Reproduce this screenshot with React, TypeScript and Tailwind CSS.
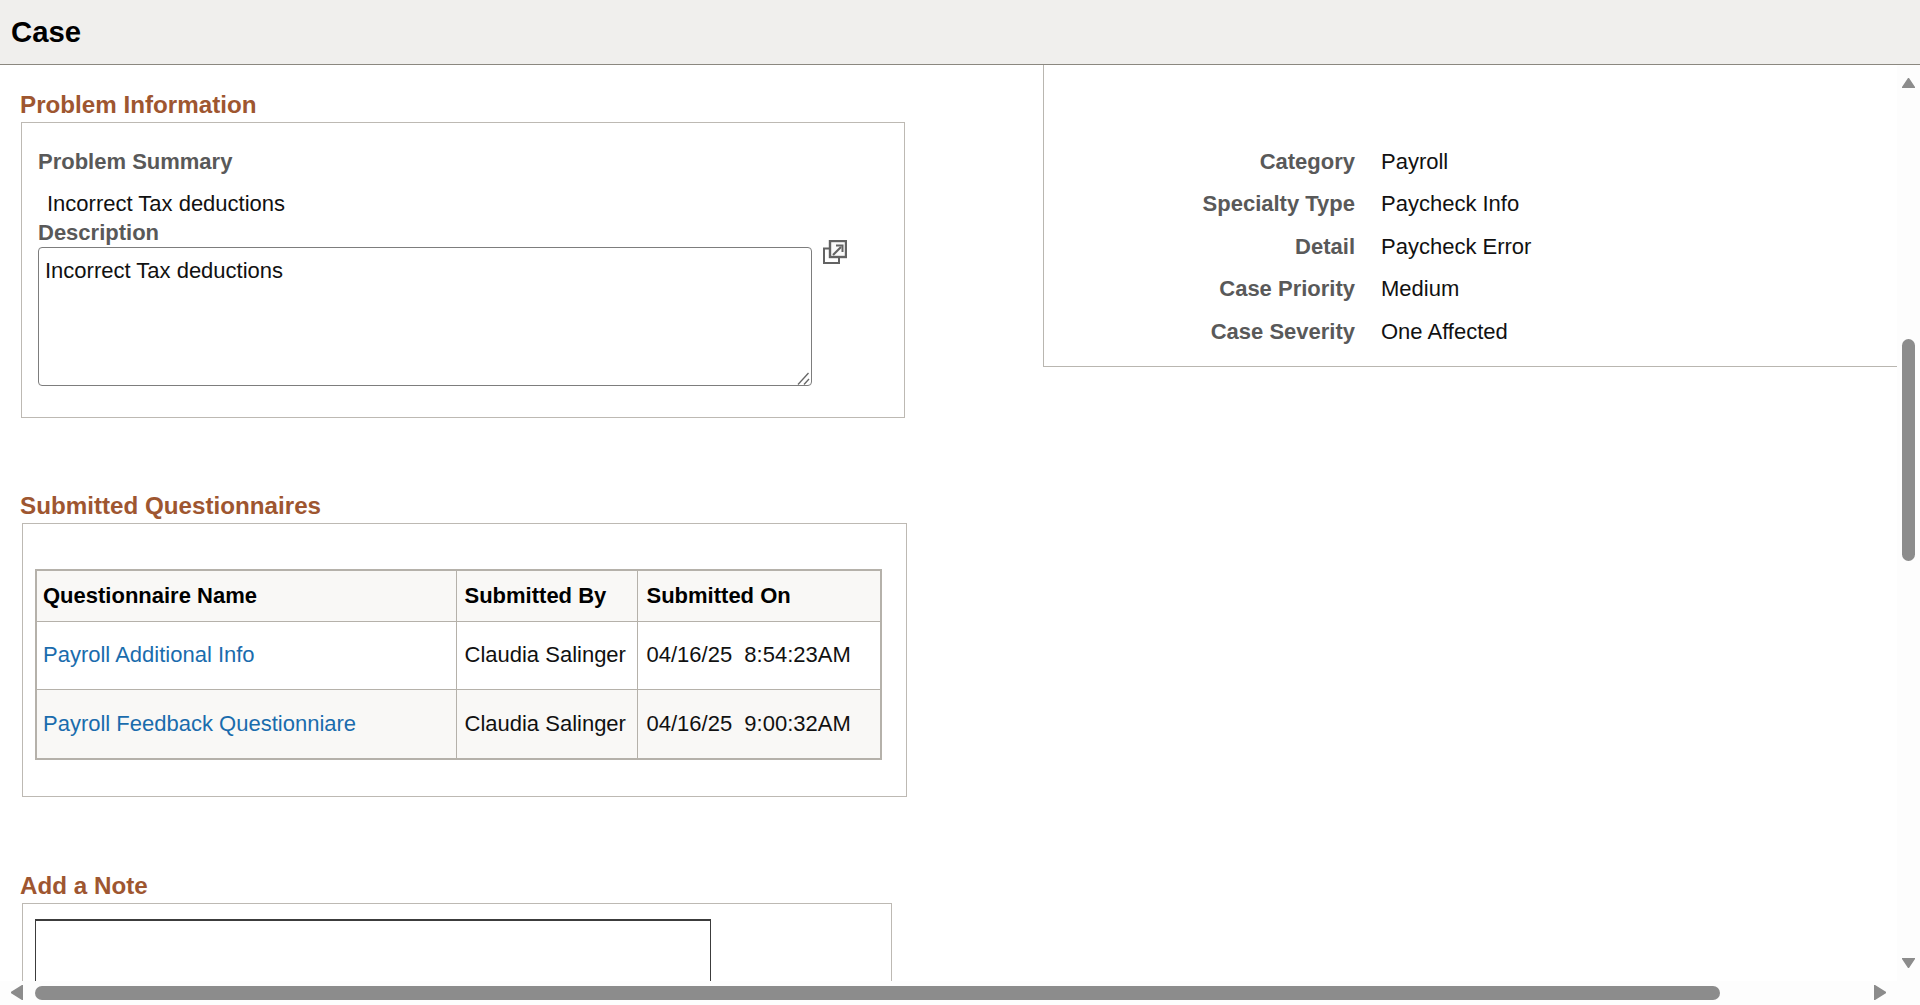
const rows = [
  { name: "Payroll Additional Info", by: "Claudia Salinger", on: "04/16/25  8:54:23AM", bg: "bg-white", h: "h-[68px]" },
  { name: "Payroll Feedback Questionniare", by: "Claudia Salinger", on: "04/16/25  9:00:32AM", bg: "bg-[#f9f8f6]", h: "h-[70px]" },
];

const details = [
  { label: "Category", value: "Payroll", gap: "" },
  { label: "Specialty Type", value: "Paycheck Info", gap: "" },
  { label: "Detail", value: "Paycheck Error", gap: "mt-px" },
  { label: "Case Priority", value: "Medium", gap: "" },
  { label: "Case Severity", value: "One Affected", gap: "mt-px" },
];

function Heading({ children }: { children: string }) {
  return <h2 className="text-[24.2px] leading-[28px] font-bold text-[#9e5630]">{children}</h2>;
}

function ExpandIcon() {
  return (
    <svg width="24" height="24" viewBox="0 0 24 24" className="ml-[11px] -mt-[7px] shrink-0" fill="none" stroke="#636363">
      <path d="M6 8.5H1v14.5h15v-5" strokeWidth="2" />
      <rect x="7" y="1" width="16" height="16" strokeWidth="2.4" fill="#fafafa" />
      <path d="M10 15L18 7" strokeWidth="2.2" />
      <path d="M13 5.5h6.5V12" strokeWidth="2" />
    </svg>
  );
}

function Arrow({ points, className }: { points: string; className: string }) {
  return (
    <svg viewBox="-0.5 -0.5 13 13" preserveAspectRatio="none" className={className}>
      <polygon points={points} fill="#8c8c8c" stroke="#8c8c8c" strokeWidth="1.5" strokeLinejoin="round" />
    </svg>
  );
}

export default function App() {
  return (
    <div className="h-[1005px] w-[1920px] flex flex-col overflow-hidden bg-white text-[22px] text-[#111] font-['Liberation_Sans',Arial,sans-serif]">
      <header className="h-[65px] shrink-0 flex items-center pl-[11px] bg-[#f0efed] border-b border-[#8b8880]">
        <h1 className="text-[29.3px] font-bold text-black">Case</h1>
      </header>

      <div className="h-[916px] shrink-0 flex overflow-hidden">
        <main className="w-[1043px] shrink-0 pl-5 pt-[26px] leading-[26px]">
          <Heading>Problem Information</Heading>
          <section className="w-[884px] h-[296px] ml-px mt-[3px] border border-[#bdb9b3] pt-[26px] pl-[16px]">
            <div className="font-bold text-[#595959]">Problem Summary</div>
            <div className="mt-[16px] pl-[9px]">Incorrect Tax deductions</div>
            <div className="mt-[3px] font-bold text-[#595959]">Description</div>
            <div className="flex items-start mt-px">
              <div className="relative w-[774px] h-[139px]">
                <textarea
                  readOnly
                  defaultValue="Incorrect Tax deductions"
                  className="block w-full h-full border border-[#7d7d7d] rounded-[4px] px-[6px] pt-[10px] leading-[26px] outline-none resize-none"
                />
                <svg width="13" height="13" viewBox="0 0 13 13" className="absolute right-[2px] bottom-px" stroke="#666" strokeWidth="1.3">
                  <path d="M1 12.5L11.5 1" />
                  <path d="M7 12.5L12 7" />
                </svg>
              </div>
              <ExpandIcon />
            </div>
          </section>

          <div className="mt-[74px]">
            <Heading>Submitted Questionnaires</Heading>
          </div>
          <section className="w-[885px] h-[274px] ml-[2px] mt-[3px] border border-[#bdb9b3] pt-[45px] pl-3">
            <table className="w-[847px] table-fixed border-collapse border-2 border-[#b5b1aa]">
              <colgroup>
                <col className="w-[420px]" />
                <col className="w-[181px]" />
                <col />
              </colgroup>
              <thead>
                <tr className="h-[51px] bg-[#f9f8f6] text-black font-bold text-left">
                  <th className="pl-[6px] pr-2 border border-[#b5b1aa]">Questionnaire Name</th>
                  <th className="px-2 border border-[#b5b1aa]">Submitted By</th>
                  <th className="pl-[9px] border border-[#b5b1aa]">Submitted On</th>
                </tr>
              </thead>
              <tbody>
                {rows.map((r) => (
                  <tr key={r.name} className={`${r.h} ${r.bg}`}>
                    <td className="pl-[6px] pr-2 border border-[#b5b1aa]">
                      <a href="#" className="text-[#1a6cad]">{r.name}</a>
                    </td>
                    <td className="px-2 border border-[#b5b1aa] whitespace-nowrap">{r.by}</td>
                    <td className="pl-[9px] border border-[#b5b1aa] whitespace-pre">{r.on}</td>
                  </tr>
                ))}
              </tbody>
            </table>
          </section>

          <div className="mt-[75px]">
            <Heading>Add a Note</Heading>
          </div>
          <section className="w-[870px] h-[200px] ml-[2px] mt-[3px] border border-[#bdb9b3] pt-[15px] pl-3">
            <div className="w-[676px] h-[160px] border border-t-2 border-[#3c3c3c]" />
          </section>
        </main>

        <aside className="w-[854px] shrink-0 self-start h-[302px] border-l border-b border-[#b9b6b0] pt-[75px]">
          {details.map((d) => (
            <div key={d.label} className={`flex items-center h-[42px] ${d.gap}`}>
              <div className="w-[311px] text-right font-bold text-[#595959]">{d.label}</div>
              <div className="ml-[26px]">{d.value}</div>
            </div>
          ))}
        </aside>

        <div className="flex-1 flex flex-col pt-[13px] pl-[5px] bg-[#fdfdfd]">
          <Arrow points="6,0 12,12 0,12" className="w-[13px] h-[10px]" />
          <div className="w-[13px] h-[222px] mt-[251px] rounded-full bg-[#8c8c8c]" />
          <Arrow points="0,0 12,0 6,12" className="w-[13px] h-[10px] mt-[397px]" />
        </div>
      </div>

      <div className="h-[24px] shrink-0 flex items-start pt-[4px] pl-[11px] bg-[#fdfdfd]">
        <Arrow points="12,0 12,12 0,6" className="w-[12px] h-[15px]" />
        <div className="w-[1685px] h-[14px] mt-px ml-3 rounded-full bg-[#8c8c8c]" />
        <Arrow points="0,0 12,6 0,12" className="w-[12px] h-[15px] ml-[154px]" />
      </div>
    </div>
  );
}
